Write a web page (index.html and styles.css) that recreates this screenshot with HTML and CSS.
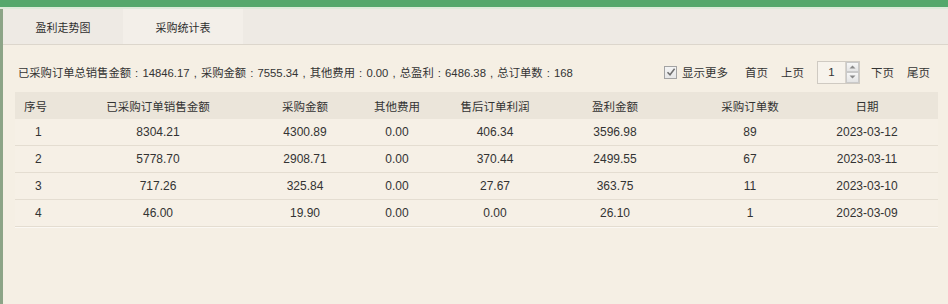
FILE: index.html
```html
<!DOCTYPE html>
<html lang="zh-CN">
<head>
<meta charset="utf-8">
<title>采购统计表</title>
<link rel="stylesheet" href="styles.css">
</head>
<body>
<div class="topbar"></div>
<div class="frame">
  <div class="tabs">
    <div class="tab">盈利走势图</div>
    <div class="tab active">采购统计表</div>
  </div>
  <div class="toolbar">
    <div class="summary">已采购订单总销售金额 : 14846.17 , 采购金额 : 7555.34 , 其他费用 : 0.00 , 总盈利 : 6486.38 , 总订单数 : 168</div>
    <div class="pager">
      <label class="more"><span class="checkbox"><svg width="10" height="10" viewBox="0 0 10 10"><path d="M1.5 5.2 L4 7.8 L8.6 1.8" fill="none" stroke="#6f6f6f" stroke-width="1.5"/></svg></span>显示更多</label>
      <span class="plink">首页</span>
      <span class="plink">上页</span>
      <span class="pagebox"><span class="pnum">1</span><span class="spin"><span class="sbtn"><svg width="7" height="4" viewBox="0 0 7 4"><path d="M0.5 3.5 L3.5 0.5 L6.5 3.5Z" fill="#8a8a8a"/></svg></span><span class="sbtn"><svg width="7" height="4" viewBox="0 0 7 4"><path d="M0.5 0.5 L3.5 3.5 L6.5 0.5Z" fill="#8a8a8a"/></svg></span></span></span>
      <span class="plink">下页</span>
      <span class="plink last">尾页</span>
    </div>
  </div>
  <div class="grid">
    <div class="row head">
      <div class="c first">序号</div><div class="c">已采购订单销售金额</div><div class="c">采购金额</div><div class="c">其他费用</div><div class="c">售后订单利润</div><div class="c">盈利金额</div><div class="c">采购订单数</div><div class="c">日期</div><div class="c"></div>
    </div>
    <div class="row">
      <div class="c first">1</div><div class="c">8304.21</div><div class="c">4300.89</div><div class="c">0.00</div><div class="c">406.34</div><div class="c">3596.98</div><div class="c">89</div><div class="c">2023-03-12</div><div class="c"></div>
    </div>
    <div class="row">
      <div class="c first">2</div><div class="c">5778.70</div><div class="c">2908.71</div><div class="c">0.00</div><div class="c">370.44</div><div class="c">2499.55</div><div class="c">67</div><div class="c">2023-03-11</div><div class="c"></div>
    </div>
    <div class="row">
      <div class="c first">3</div><div class="c">717.26</div><div class="c">325.84</div><div class="c">0.00</div><div class="c">27.67</div><div class="c">363.75</div><div class="c">11</div><div class="c">2023-03-10</div><div class="c"></div>
    </div>
    <div class="row">
      <div class="c first">4</div><div class="c">46.00</div><div class="c">19.90</div><div class="c">0.00</div><div class="c">0.00</div><div class="c">26.10</div><div class="c">1</div><div class="c">2023-03-09</div><div class="c"></div>
    </div>
  </div>
</div>
</body>
</html>
```
FILE: styles.css
```css
html, body {
  margin: 0;
  padding: 0;
}
body {
  width: 948px;
  height: 304px;
  overflow: hidden;
  background: #f5efe4;
  font-family: "Liberation Sans", "Noto Sans CJK SC", sans-serif;
  font-size: 12px;
  color: #333;
}
.topbar {
  height: 7px;
  background: #55a86c;
  border-bottom: 2px solid #dcebd9;
}
.frame {
  border-left: 3px solid #8ca487;
  height: 295px;
  box-sizing: border-box;
}
.tabs {
  display: flex;
  height: 35px;
  background: #eeeae4;
  border-bottom: 1px solid #dcd6cc;
}
.tab {
  width: 120px;
  display: flex;
  align-items: center;
  justify-content: center;
  font-size: 11px;
  color: #2e2e2e;
}
.tab.active {
  background: #f3efe9;
}
.toolbar {
  display: flex;
  align-items: center;
  justify-content: space-between;
  height: 24px;
  margin-top: 15px;
  padding: 0 5px 0 15px;
}
.summary {
  font-size: 11.3px;
  word-spacing: 1px;
}
.pager {
  display: flex;
  align-items: center;
  font-size: 11.5px;
}
.more {
  display: flex;
  align-items: center;
  gap: 5px;
  margin-right: 17px;
}
.checkbox {
  width: 11px;
  height: 11px;
  border: 1px solid #a3a3a3;
  background: linear-gradient(#f4f4f4, #e6e6e6);
  display: flex;
  align-items: center;
  justify-content: center;
}
.plink {
  margin-right: 13px;
}
.plink.last {
  margin-right: 13px;
}
.pagebox {
  display: flex;
  align-items: stretch;
  width: 43px;
  height: 23px;
  border: 1px solid #cfcac2;
  background: #f7f3ec;
  margin-right: 11px;
  box-sizing: border-box;
}
.pnum {
  flex: 1;
  display: flex;
  align-items: center;
  justify-content: center;
}
.spin {
  width: 13px;
  display: flex;
  flex-direction: column;
  border-left: 1px solid #d8d3cb;
}
.sbtn {
  flex: 1;
  display: flex;
  align-items: center;
  justify-content: center;
  background: linear-gradient(#f7f7f7, #e4e4e4);
  border: 1px solid #c9c9c9;
}
.grid {
  margin: 8px 10px 0 12px;
}
.row {
  display: grid;
  grid-template-columns: 45px 196px 98px 86px 110px 130px 140px 94px 1fr;
  height: 27px;
  align-items: center;
  border-bottom: 1px solid #e4ddd1;
  box-shadow: 0 1px 0 #fbf8f3;
  box-sizing: border-box;
  background: #f6f0e6;
}
.row.head {
  height: 27px;
  background: #ebe5da;
  border-bottom: none;
  box-shadow: none;
  font-size: 11.5px;
}
.c {
  text-align: center;
  white-space: nowrap;
}
.c.first {
  text-align: left;
  padding-left: 9px;
}
.row:not(.head) .c.first {
  padding-left: 20px;
}
```
